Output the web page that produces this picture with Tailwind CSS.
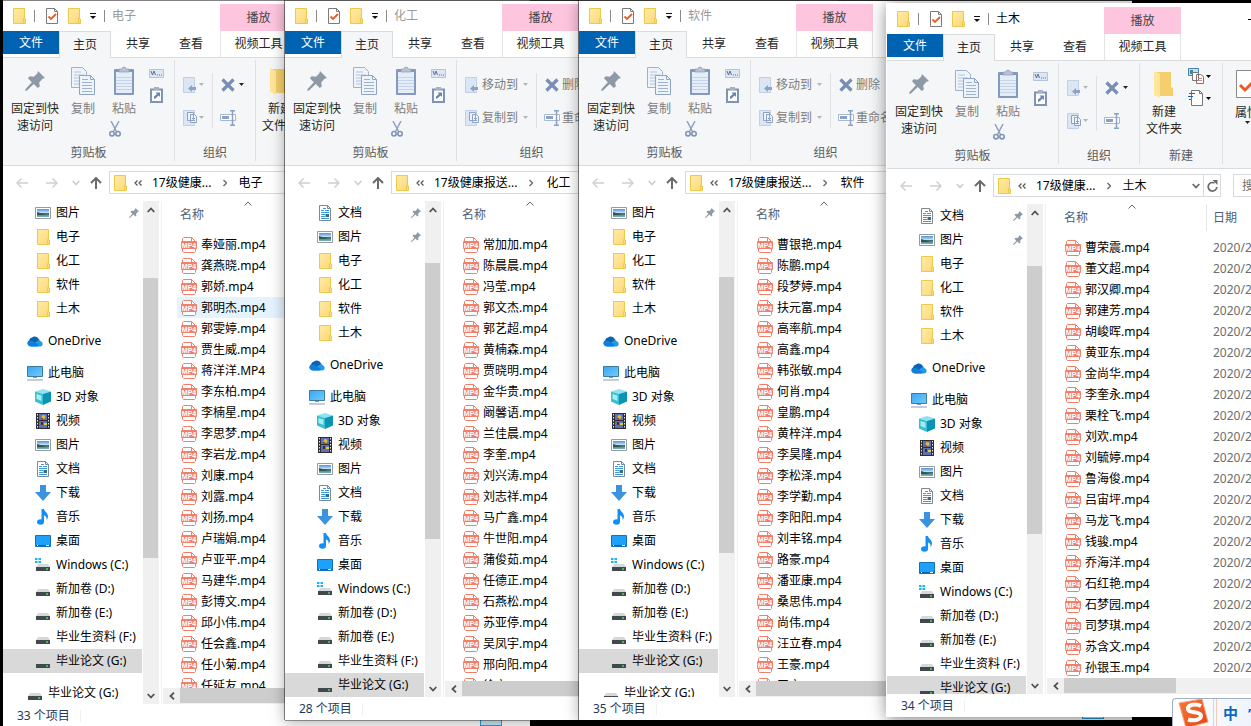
<!DOCTYPE html>
<html lang="zh-CN">
  <head>
    <meta charset="UTF-8" />
    <meta name="viewport" content="width=device-width, initial-scale=1.0" />
    <title>文件资源管理器</title>
    <script src="https://cdn.jsdelivr.net/npm/@tailwindcss/browser@4"></script>
  </head>
  <body class="bg-black font-['Noto_Sans','Noto_Sans_CJK_SC',sans-serif] text-xs text-black">
    <!-- Icons -->
    <svg class="absolute size-0">
      <defs>
        <linearGradient id="gFolder" x1="0" y1="0" x2="1" y2="1">
          <stop offset="0" stop-color="#ffeba6" />
          <stop offset="1" stop-color="#fcd876" />
        </linearGradient>
        <linearGradient id="gScreen" x1="0" y1="0" x2="1" y2="1">
          <stop offset="0" stop-color="#3aa5f0" />
          <stop offset="1" stop-color="#72cdfd" />
        </linearGradient>
        <linearGradient id="gSky" x1="0" y1="0" x2="0" y2="1">
          <stop offset="0" stop-color="#4f8fe0" />
          <stop offset="0.5" stop-color="#cfe6f8" />
          <stop offset="0.55" stop-color="#3c6b66" />
          <stop offset="1" stop-color="#7fb4c4" />
        </linearGradient>
        <linearGradient id="gSogou" x1="0" y1="0" x2="1" y2="1">
          <stop offset="0" stop-color="#f97a3c" />
          <stop offset="1" stop-color="#e8400f" />
        </linearGradient>
      </defs>
      <symbol id="folder" viewBox="0 0 13 16">
        <path d="M.5.5h11v10.5h1v4.5H.5z" fill="url(#gFolder)" stroke="#ecc94b" />
        <path d="M10.500 15v-4.500h1" fill="none" stroke="#ecc94b" />
      </symbol>
      <symbol id="check" viewBox="0 0 12 16">
        <path d="M.5.5h8l3 3v12H.5z" fill="#fff" stroke="#7a7a7a" />
        <path d="M8.500.5v3h3" fill="none" stroke="#7a7a7a" />
        <path d="M2.500 8.500l2.500 2.500 5-5" fill="none" stroke="#ee5a24" stroke-width="1.800" />
      </symbol>
      <symbol id="quick" viewBox="0 0 8 8">
        <path d="M1 1.500h6" stroke="#111" />
        <path d="M1 4h6L4 7z" fill="#111" />
      </symbol>
      <symbol id="caret" viewBox="0 0 5 3"><path d="M0 0h5L2.500 3z" fill="currentColor" /></symbol>
      <symbol id="pushpin" viewBox="0 0 20 20">
        <path d="M13 0l7 7-2.500.8-3.300 3.600.6 4-2 1.600-4-4L2 19.500.200 20 .6 18l6.200-6.700L3 7.300l1.600-2 4.300.5L12.300 2.500z" fill="#8d9aa6" />
      </symbol>
      <symbol id="copy" viewBox="0 0 24 28">
        <path d="M.5.5h11l4 4v16H.5z" fill="#eef3fa" stroke="#9fb2cd" />
        <path d="M3 5h7M3 8h10M3 11h10M3 14h10M3 17h10" stroke="#b5c5dc" />
        <path d="M8.500 8.500h11l4 4v15h-15z" fill="#eef3fa" stroke="#8fa5c5" />
        <path d="M19.500 8.500v4h4" fill="none" stroke="#8fa5c5" />
        <path d="M11 12.500h6M11 15.500h10M11 18.500h10M11 21.500h10M11 24.500h10" stroke="#9fb2cd" />
      </symbol>
      <symbol id="paste" viewBox="0 0 20 29">
        <rect x="0" y="3" width="20" height="26" rx="1" fill="#8399bd" />
        <rect x="2" y="6" width="16" height="21" fill="#e4edf8" />
        <path d="M2 11.500h16M2 14.500h16M2 17.500h16M2 20.500h16M2 23.500h16" stroke="#c3d3e8" />
        <path d="M5 6V3h3a2 2 0 014 0h3v3z" fill="#b9c4d3" stroke="#8b9bb3" stroke-width=".7" />
      </symbol>
      <symbol id="scissors" viewBox="0 0 12 16">
        <path d="M2 0l5.500 10.500M10 0L4.500 10.500" stroke="#8ea0bb" stroke-width="1.500" />
        <circle cx="3" cy="12.700" r="2.200" fill="none" stroke="#7f93b5" stroke-width="1.600" />
        <circle cx="9" cy="12.700" r="2.200" fill="none" stroke="#7f93b5" stroke-width="1.600" />
      </symbol>
      <symbol id="copypath" viewBox="0 0 15 9">
        <path d="M.5.5h14v8H.5z" fill="#dde7f4" stroke="#b4c4dc" />
        <path d="M2 2l1.500 4L5 2l1.500 4M8 6h1M10 6h1M12 6h1" fill="none" stroke="#5d7194" />
      </symbol>
      <symbol id="pastelink" viewBox="0 0 13 16">
        <path d="M1 2.500h11V15H1z" fill="#fff" stroke="#7e93b6" stroke-width="2" />
        <path d="M4 0h5v3H4z" fill="#a3b2ca" />
        <path d="M4 12V9.500L7 7 5.500 5.500H10V10L8.500 8.500 6 11z" fill="#6c84ad" />
      </symbol>
      <symbol id="moveto" viewBox="0 0 14 16">
        <path d="M.5.5h11v15H.5z" fill="#dbe6f4" stroke="#c1d0e6" />
        <path d="M5 11.500L9 8v2h4v3H9v2z" fill="#8da2c4" />
      </symbol>
      <symbol id="copyto" viewBox="0 0 14 16">
        <path d="M.5.5h11v15H.5z" fill="#dbe6f4" stroke="#c1d0e6" />
        <path d="M4.500 2.500h6v8h-6zM7.500 4.500h4l2 2v6h-6z" fill="#eef3fa" stroke="#8da2c4" />
        <path d="M9 8.500h3M9 10.500h3" stroke="#8da2c4" />
      </symbol>
      <symbol id="delete" viewBox="0 0 14 14">
        <path d="M1.500 1.500l11 11M12.500 1.500l-11 11" stroke="#788eb5" stroke-width="3.200" />
      </symbol>
      <symbol id="rename" viewBox="0 0 16 16">
        <path d="M.5 4.500h15v6H.5z" fill="#fff" stroke="#a8b8d0" />
        <path d="M2 6h7v3H2z" fill="#8ba1c5" />
        <path d="M10 .8h5M10 15.200h5M12.500 1v14" stroke="#8ba1c5" stroke-width="1.500" />
      </symbol>
      <symbol id="newfolder" viewBox="0 0 20 27">
        <path d="M2 1h15v15l2 1v8H2z" fill="#f5cf6d" />
        <path d="M0 0l6 3v24l-6-3z" fill="#ffe69a" />
      </symbol>
      <symbol id="newitem" viewBox="0 0 16 16">
        <path d="M.5.5h10v7H.5z" fill="#bfe2f3" stroke="#3f88b5" />
        <path d="M2 2h3v4H2z" fill="#4d7f8f" />
        <path d="M4.500 4.500h6v8h-6zM8.500 6.500h4l3 2v7h-7z" fill="#fff" stroke="#777" />
        <path d="M10 10.500h4M10 12.500h4" stroke="#d98a7a" />
      </symbol>
      <symbol id="easy" viewBox="0 0 16 16">
        <path d="M3.500.5h8l3 3v12h-11z" fill="#fff" stroke="#777" />
        <path d="M11.500.5v3h3" fill="none" stroke="#777" />
        <path d="M1 3.500h6M0 6.500h5M1 9.500h2" stroke="#2b5f94" />
      </symbol>
      <symbol id="props" viewBox="0 0 22 28">
        <path d="M.5.5h21v27H.5z" fill="#fff" stroke="#8a8a8a" />
        <path d="M4 15l5 5 9-9" fill="none" stroke="#ee5a24" stroke-width="3" />
      </symbol>
      <symbol id="back" viewBox="0 0 12 10"><path d="M12 5H1M5.500.5L1 5l4.500 4.500" fill="none" stroke="currentColor" stroke-width="1.500" /></symbol>
      <symbol id="forward" viewBox="0 0 12 10"><path d="M0 5h11M6.500.5L11 5 6.500 9.500" fill="none" stroke="currentColor" stroke-width="1.500" /></symbol>
      <symbol id="up" viewBox="0 0 12 12"><path d="M6 12V1.500M1 6l5-5 5 5" fill="none" stroke="currentColor" stroke-width="2" /></symbol>
      <symbol id="down" viewBox="0 0 8 6"><path d="M.7 1L4 4.500 7.300 1" fill="none" stroke="currentColor" stroke-width="1.800" /></symbol>
      <symbol id="chevup" viewBox="0 0 8 6"><path d="M.7 5L4 1.500 7.300 5" fill="none" stroke="currentColor" stroke-width="1.800" /></symbol>
      <symbol id="thinup" viewBox="0 0 8 5"><path d="M.5 4.500L4 1l3.500 3.500" fill="none" stroke="currentColor" /></symbol>
      <symbol id="left" viewBox="0 0 6 8"><path d="M5 .7L1.500 4 5 7.300" fill="none" stroke="currentColor" stroke-width="1.800" /></symbol>
      <symbol id="right" viewBox="0 0 4 8"><path d="M.5 1l3 3-3 3" fill="none" stroke="currentColor" stroke-width="1.400" /></symbol>
      <symbol id="more" viewBox="0 0 8 6"><path d="M3.500.5L1 3l2.500 2.500M7.500.5L5 3l2.500 2.500" fill="none" stroke="currentColor" stroke-width="1.200" /></symbol>
      <symbol id="refresh" viewBox="0 0 11 12">
        <path d="M9.800 7A4.300 4.300 0 1 1 7.500 3" fill="none" stroke="currentColor" stroke-width="1.700" />
        <path d="M5.500 0h5v5z" fill="currentColor" />
      </symbol>
      <symbol id="mp4" viewBox="0 0 16 16">
        <path d="M1.500 5V1.500l1-1h8l4 4V5M1.500 11v3.500l1 1h11l1-1V11" fill="#fff" stroke="#f08069" />
        <path d="M10.500.5v4h4" fill="none" stroke="#f08069" />
        <rect x="0" y="4" width="16" height="8" rx="1" fill="#f08069" />
        <text x="8" y="10.500" text-anchor="middle" font-size="7" font-weight="700" fill="#fff" font-family="Liberation Sans, sans-serif">MP4</text>
      </symbol>
      <symbol id="doc" viewBox="0 0 16 16">
        <path d="M2.500.5h8l3 3v12h-11z" fill="#fff" stroke="#7b8a94" />
        <path d="M10.500.5v3h3" fill="none" stroke="#7b8a94" />
        <path d="M6 3.500h3M4 5.500h3M8 5.500h4M4 7.500h8M4 9.500h4M4 11.500h4M4 13.500h8" stroke="#3f9bd6" />
        <path d="M8.500 9h3.500v3H8.500z" fill="#3c6b85" />
      </symbol>
      <symbol id="pic" viewBox="0 0 16 16">
        <path d="M.5 2.500h15v11H.5z" fill="#fff" stroke="#959b9f" />
        <path d="M2 4h12v8H2z" fill="url(#gSky)" />
        <path d="M2 7l5 1.500 4 1.500H2z" fill="#2c5a4f" />
      </symbol>
      <symbol id="cloud" viewBox="0 0 16 16">
        <path d="M3 13a3 3 0 01-1-5.500A4 4 0 015 4.500a4.500 4.500 0 017 2l1 .5-8 6z" fill="#0a63b8" />
        <path d="M3.500 13.500L10 8a3 3 0 014 .5 2.600 2.600 0 01-.5 5z" fill="#1f9be8" />
        <path d="M3.200 13.500a3 3 0 01-2-5c1-1 3-1.200 5-.2l6 4-2 1.200z" fill="#127fd6" />
      </symbol>
      <symbol id="pc" viewBox="0 0 16 16">
        <path d="M.5 1.500h15v10H.5z" fill="url(#gScreen)" stroke="#3b7ca5" />
        <path d="M6 12.500h4M0 15h16" stroke="#8a9db0" />
      </symbol>
      <symbol id="cube" viewBox="0 0 16 16">
        <path d="M8 0l8 2.500L8 5 0 2.500z" fill="#8fe3ee" />
        <path d="M0 2.500L8 5v11l-8-3.500z" fill="#35bfd0" />
        <path d="M16 2.500L8 5v11l8-3.500z" fill="#0a93b2" />
        <path d="M1.500 5l5 1.500v5.500l-5-2z" fill="#a5ecf3" />
      </symbol>
      <symbol id="video" viewBox="0 0 16 16">
        <path d="M1 0h14v16H1z" fill="#2d2d33" />
        <path d="M2.500 1v14M13.500 1v14" stroke="#e6e6e6" stroke-dasharray="1.500 1.500" />
        <path d="M4 1h8v6H4zM4 8h8v7H4z" fill="#5873b8" />
        <circle cx="8.500" cy="4" r="2" fill="#e0b93a" />
        <path d="M6 5h2v2H6z" fill="#b5432a" />
        <path d="M6 9h2v3H6z" fill="#3d2f2a" />
        <path d="M9 10h3v2H9z" fill="#e8c93f" />
      </symbol>
      <symbol id="download" viewBox="0 0 16 16"><path d="M5 0h6v7h5l-8 9-8-9h5z" fill="#3b93e0" /></symbol>
      <symbol id="music" viewBox="0 0 16 16">
        <path d="M6.500 0h2.500c.3 2.500 4 3.500 4 7.500 0 1.500-.7 2.500-1.500 3.500.5-2.500-.5-4-2.500-4.500V13H6.500z" fill="#1391f2" />
        <ellipse cx="5.500" cy="13" rx="3.500" ry="2.700" fill="#1391f2" />
      </symbol>
      <symbol id="desk" viewBox="0 0 16 16">
        <path d="M.5 2.500h15v11H.5z" fill="#1da1fb" stroke="#1473b8" />
        <path d="M1 12.500h14" stroke="#0b5fa3" />
        <path d="M2 12.500h1M11 12.500h3" stroke="#fff" />
      </symbol>
      <symbol id="drive" viewBox="0 0 16 16">
        <path d="M3 8h10l2 3H1z" fill="#d5d9dd" />
        <path d="M1 11h14v4H1z" fill="#43484c" />
        <path d="M11 13h2" stroke="#3fe05a" stroke-width="1.500" />
      </symbol>
      <symbol id="windrive" viewBox="0 0 16 16">
        <path d="M3 7h10l2 3H1z" fill="#d5d9dd" />
        <path d="M1 10h14v4H1z" fill="#43484c" />
        <path d="M11 12h2" stroke="#3fe05a" stroke-width="1.500" />
        <path d="M0 1h2.500v2H0zM3.500 1H6v2H3.500zM0 4h2.500v2H0zM3.500 4H6v2H3.500z" fill="#16b4f2" />
      </symbol>
      <symbol id="sogou" viewBox="0 0 32 28">
        <path d="M2 4L25 0l6 23-22 6z" fill="url(#gSogou)" stroke="#f9a27a" />
        <path d="M24 7C18 4 10 6 11 10.500c1 4 12 1.500 13 6 .5 4-7 6-13 4" fill="none" stroke="#fff" stroke-width="4" />
      </symbol>
    </svg>

    <main id="desktop" class="relative h-screen overflow-hidden"></main>

    <!-- Input method bar -->
    <aside class="absolute right-0 bottom-0 flex h-7 w-[79px] items-center overflow-hidden rounded-tl-sm border-t border-l border-[#9fb0c0] bg-gradient-to-r from-white to-[#eef4fb]">
      <svg class="ml-1 h-7 w-8 shrink-0"><use href="#sogou" /></svg>
      <span class="ml-1 h-7 w-1 shrink-0 border-x border-[#f7c9bb]"></span>
      <button class="ml-1.5 shrink-0 text-[15px] font-bold text-[#0a66c2]">中</button>
      <button class="ml-2.5 shrink-0 text-[15px] font-bold text-[#0a66c2]">’</button>
    </aside>

    <script>
      const quick = [
        ["folder", "电子"],
        ["folder", "化工"],
        ["folder", "软件"],
        ["folder", "土木"],
      ];

      const computer = [
        ["cube", "3D 对象"],
        ["video", "视频"],
        ["pic", "图片"],
        ["doc", "文档"],
        ["download", "下载"],
        ["music", "音乐"],
        ["desk", "桌面"],
        ["windrive", "Windows (C:)"],
        ["drive", "新加卷 (D:)"],
        ["drive", "新加卷 (E:)"],
        ["drive", "毕业生资料 (F:)"],
      ];

      const windows = [
        {
          title: "电子",
          frame: "top-0 -bottom-px left-[3px] w-[527px] border-[#848284]",
          titleColor: "text-[#999999]",
          path: "17级健康...",
          count: 33,
          pins: ["图片"],
          thumb: [60, 280],
          hover: 3,
          files: "奉娅丽 龚燕晓 郭娇 郭明杰 郭雯婷 贾生威 蒋洋洋.MP4 李东柏 李楠星 李思梦 李岩龙 刘康 刘露 刘扬 卢瑞娟 卢亚平 马建华 彭博文 邱小伟 任会鑫 任小菊 任延友",
        },
        {
          title: "化工",
          frame: "top-0 bottom-[6px] left-[285px] w-[553px] border-white/15",
          titleColor: "text-[#999999]",
          wide: true,
          path: "17级健康报送...",
          count: 28,
          pins: ["文档", "图片"],
          thumb: [45, 276],
          files: "常加加 陈晨晨 冯莹 郭文杰 郭艺超 黄楠森 贾晓明 金华贵 阚馨语 兰佳晨 李奎 刘兴涛 刘志祥 马广鑫 牛世阳 蒲俊茹 任德正 石燕松 苏亚停 吴凤宇 邢向阳 徐文",
        },
        {
          title: "软件",
          frame: "top-0 bottom-[6px] left-[579px] w-[553px] border-white/15",
          titleColor: "text-[#999999]",
          wide: true,
          path: "17级健康报送...",
          count: 35,
          pins: ["图片"],
          thumb: [59, 276],
          files: "曹银艳 陈鹏 段梦婷 扶元富 高率航 高鑫 韩张敏 何肖 皇鹏 黄梓洋 李昊隆 李松泽 李学勤 李阳阳 刘丰铭 路豪 潘亚康 桑思伟 尚伟 汪立春 王豪 王文",
        },
        {
          title: "土木",
          frame: "top-[3px] bottom-[9px] left-[887px] w-[481px] border-white",
          titleColor: "text-black",
          active: true,
          path: "17级健康...",
          count: 34,
          pins: ["文档", "图片"],
          thumb: [45, 268],
          files: "曹荣震 董文超 郭汉卿 郭建芳 胡峻晖 黄亚东 金尚华 李奎永 栗栓飞 刘欢 刘毓婷 鲁海俊 吕宙坪 马龙飞 钱骏 乔海洋 石红艳 石梦园 司梦琪 苏含文 孙银玉",
        },
      ];

      const icon = (id, cls) => `<svg class="shrink-0 ${cls}"><use href="#${id}"/></svg>`;

      function titleBar(w) {
        return `
        <div class="flex h-[30px] items-center">
          <div class="flex w-[217px] shrink-0 items-center pl-2.5">
            ${icon("folder", "h-4 w-[13px]")}
            <span class="ml-2 h-3 w-px bg-[#8a8a8a]"></span>
            <button class="ml-[11px]" aria-label="属性">${icon("check", "h-4 w-3")}</button>
            <button class="ml-2.5" aria-label="新建文件夹">${icon("folder", "h-4 w-[13px]")}</button>
            <button class="ml-2" aria-label="自定义快速访问工具栏">${icon("quick", "size-2")}</button>
            <span class="ml-[7px] h-3 w-px bg-[#8a8a8a]"></span>
            <h1 class="ml-[7px] ${w.titleColor}">${w.title}</h1>
          </div>
          <div class="flex h-[27px] w-[77px] shrink-0 items-center justify-center self-end bg-[#fec5df] text-[#444]">播放</div>
          ${
            w.active
              ? `<div class="ml-auto flex">
                  <button class="flex h-[30px] w-[46px] items-center justify-center" aria-label="最小化"><span class="h-px w-2.5 bg-black"></span></button>
                  <button class="flex h-[30px] w-[46px] items-center justify-center" aria-label="最大化"><span class="size-2.5 border border-black"></span></button>
                  <button class="h-[30px] w-[46px]" aria-label="关闭">✕</button>
                </div>`
              : ""
          }
        </div>`;
      }

      function tabs() {
        return `
        <div class="flex h-[27px] shrink-0 border-b border-[#dadbdc] text-[#262626]">
          <button class="h-[23px] w-14 bg-[#0063b1] pt-px text-white">文件</button>
          <button class="h-[27px] w-[52px] border border-b-0 border-[#dadbdc] bg-[#f5f6f7] pb-px">主页</button>
          <button class="h-[26px] w-[54px]">共享</button>
          <button class="h-[26px] w-[52px]">查看</button>
          <button class="ml-[3px] h-[26px] w-[77px] border-x border-[#e4e4e4]">视频工具</button>
        </div>`;
      }

      const group = (label, width, body) => `
        <section class="mt-0.5 flex h-[101px] shrink-0 flex-col border-r border-[#dfe0e1] ${width}">
          <div class="flex h-[86px] items-start">${body}</div>
          <h2 class="text-center leading-4 text-[#5a5a5a]">${label}</h2>
        </section>`;

      function organize(w) {
        const row = (id, label) => `
          <button class="flex h-[33px] items-center">
            ${icon(id, "h-4 w-3.5")}
            ${w.wide ? `<span class="ml-[3px] mr-[5px]">${label}</span>` : `<span class="w-0.5"></span>`}
            ${icon("caret", "h-[3px] w-[5px] text-[#b5b5b5]")}
          </button>`;
        return group("组织", w.wide ? "w-[150px]" : "w-[81px]", `
          <div class="ml-2 pt-2 text-[#7d7d7d]">${row("moveto", "移动到")}${row("copyto", "复制到")}</div>
          <span class="mt-[13px] ml-2 h-[55px] w-px bg-[#dfe0e1]"></span>
          <div class="ml-[7px] pt-2 text-[#7d7d7d]">
            <button class="flex h-[33px] items-center whitespace-nowrap">
              ${icon("delete", "mx-px size-3.5")}
              ${w.wide ? `<span class="ml-0.5">删除</span>` : icon("caret", "ml-[3px] h-[3px] w-[5px] text-[#222]")}
            </button>
            <button class="flex h-[33px] items-center whitespace-nowrap">
              ${icon("rename", "size-4")}
              ${w.wide ? `<span class="ml-0.5">重命名</span>` : ""}
            </button>
          </div>`);
      }

      function ribbon(w) {
        const clipboard = group("剪贴板", "w-[172px]", `
          <button class="flex w-16 flex-col items-center pt-[11px] leading-[17px] text-[#262626]">
            ${icon("pushpin", "mb-[9px] size-5")}固定到快<br />速访问
          </button>
          <button class="flex w-8 flex-col items-center pt-[7px] leading-[17px] text-[#7d7d7d]">
            ${icon("copy", "mb-[5px] h-7 w-6")}复制
          </button>
          <div class="flex w-[50px] flex-col items-center pt-1.5 leading-[17px] text-[#7d7d7d]">
            <button class="flex flex-col items-center">${icon("paste", "mb-[5px] h-[29px] w-5")}粘贴</button>
            <button class="mt-1 ml-2.5 self-start" aria-label="剪切">${icon("scissors", "h-4 w-3")}</button>
          </div>
          <div class="flex flex-col items-center gap-[9px] pt-[9px]">
            <button aria-label="复制路径">${icon("copypath", "h-[9px] w-[15px]")}</button>
            <button aria-label="粘贴快捷方式">${icon("pastelink", "h-4 w-[13px]")}</button>
          </div>`);

        const create = group("新建", "w-[83px]", `
          <button class="flex w-12 flex-col items-center pt-2 leading-[17px] text-[#262626]">
            ${icon("newfolder", "mb-[5px] h-[27px] w-5")}新建<br />文件夹
          </button>
          <div class="flex flex-col gap-1.5 pt-[5px]">
            <button class="flex items-center gap-0.5" aria-label="新建项目">${icon("newitem", "size-4")}${icon("caret", "h-[3px] w-[5px]")}</button>
            <button class="flex items-center gap-0.5" aria-label="轻松访问">${icon("easy", "size-4")}${icon("caret", "h-[3px] w-[5px]")}</button>
          </div>`);

        const open = group("打开", "w-[96px]", `
          <button class="flex w-12 flex-col items-center pt-[7px] leading-[17px] text-[#262626]">
            ${icon("props", "mb-1.5 h-7 w-[22px]")}属性${icon("caret", "h-[3px] w-[5px]")}
          </button>`);

        return `<div class="flex h-[108px] shrink-0 overflow-hidden border-b border-[#dadbdc] bg-[#f5f6f7]">
          ${clipboard}${organize(w)}${w.wide ? "" : create + open}
        </div>`;
      }

      function addressBar(w) {
        return `
        <div class="flex h-[35px] shrink-0 items-start pt-[5px]">
          <div class="flex h-[23px] w-[106px] shrink-0 items-center pl-[13px] text-[#d0d0d0]">
            <button aria-label="后退">${icon("back", "h-2.5 w-3")}</button>
            <button class="ml-[18px]" aria-label="前进">${icon("forward", "h-2.5 w-3")}</button>
            <button class="ml-3.5" aria-label="最近">${icon("down", "h-1.5 w-2")}</button>
            <button class="ml-2.5 text-[#6a6a6a]" aria-label="向上">${icon("up", "size-3")}</button>
          </div>
          <nav class="flex h-[23px] shrink-0 items-center border border-[#d9d9d9] whitespace-nowrap ${w.wide ? "w-[300px]" : "w-[228px]"}">
            ${icon("folder", "ml-1 h-4 w-[13px]")}
            ${icon("more", "ml-[7px] h-1.5 w-2 text-[#555]")}
            <a href="#" class="ml-2.5">${w.path}</a>
            ${icon("right", "ml-3 h-2 w-1 text-[#6a6a6a]")}
            <a href="#" class="${w.wide ? "ml-[13px]" : "ml-[11px]"}">${w.title}</a>
            <button class="mr-[3px] ml-auto text-[#6a6a6a]" aria-label="历史">${icon("down", "h-1.5 w-2")}</button>
            <button class="flex h-[21px] w-[17px] items-center justify-center border-l border-[#d9d9d9] text-[#6a6a6a]" aria-label="刷新">${icon("refresh", "h-3 w-[11px]")}</button>
          </nav>
          <input type="search" aria-label="搜索" placeholder="搜索&quot;${w.title}&quot;" class="ml-3 h-[23px] min-w-0 flex-1 border border-[#d9d9d9] pl-2 placeholder:text-[#6d6d6d]" />
        </div>`;
      }

      function navPane(w) {
        const child = ([id, label], extra = "", pinned = false) => `
          <a href="#" class="flex h-6 shrink-0 items-center pl-8 whitespace-nowrap ${extra}">
            ${icon(id, id === "folder" ? "mr-[6px] ml-0.5 h-4 w-[13px]" : "mr-[5px] size-4")}${label}
            ${pinned ? icon("pushpin", "mr-[3px] ml-auto size-2.5") : ""}
          </a>`;
        const parent = (id, label) => `
          <a href="#" class="mt-2 flex h-6 shrink-0 items-center gap-[5px] pl-6 whitespace-nowrap">${icon(id, "size-4")}${label}</a>`;
        return `
        <nav class="flex w-[139px] shrink-0 flex-col overflow-hidden">
          ${w.pins.map((p) => child([p === "文档" ? "doc" : "pic", p], "", true)).join("")}
          ${quick.map((q) => child(q)).join("")}
          ${parent("cloud", "OneDrive")}
          ${parent("pc", "此电脑")}
          ${computer.map((c) => child(c)).join("")}
          ${child(["drive", "毕业论文 (G:)"], "bg-[#d9d9d9]")}
          ${parent("drive", "毕业论文 (G:)")}
        </nav>
        <div class="ml-px flex w-4 shrink-0 flex-col bg-[#f0f0f0] text-[#505050]">
          <button class="flex h-[17px] w-[15px] items-center justify-center" aria-label="向上滚动">${icon("chevup", "h-1.5 w-2")}</button>
          <div class="w-[15px] bg-[#cdcdcd]" style="margin-top: ${w.thumb[0]}px; height: ${w.thumb[1]}px"></div>
          <button class="mt-auto flex h-[17px] w-[15px] items-center justify-center" aria-label="向下滚动">${icon("down", "h-1.5 w-2")}</button>
        </div>`;
      }

      function filePane(w) {
        const rows = w.files.split(" ").map((name, i) => `
          <tr class="h-[21px] ${i === w.hover ? "bg-[#e5f3ff]" : ""}">
            <td class="p-0"><div class="flex h-[21px] items-center gap-1 pl-1">${icon("mp4", "size-4")}${name.includes(".") ? name : name + ".mp4"}</div></td>
            <td class="p-0 pl-[7px] text-[#6d6d6d]">2020/2/10</td>
          </tr>`);
        return `
        <div class="ml-0.5 flex min-w-0 flex-1 flex-col border-l border-[#f0f0f0]">
          <div class="min-h-0 flex-1 overflow-hidden pl-[15px]">
            <table class="w-full table-fixed border-collapse whitespace-nowrap">
              <thead>
                <tr class="h-[33px] text-left align-top text-[#4c607a]">
                  <th class="relative w-[145px] p-0 pl-[3px] leading-7 font-normal">名称${icon("thinup", "absolute top-0 left-[67px] h-[5px] w-2 text-[#666]")}</th>
                  <th class="p-0 font-normal"><div class="h-[27px] border-l border-[#e5e5e5] pl-1.5 leading-7">日期</div></th>
                </tr>
              </thead>
              <tbody>${rows.join("")}</tbody>
            </table>
          </div>
          <div class="ml-px flex h-4 shrink-0 bg-[#f0f0f0] text-[#505050]">
            <button class="flex w-[17px] items-center justify-center" aria-label="向左滚动">${icon("left", "h-2 w-1.5")}</button>
            <div class="h-[15px] bg-[#cdcdcd] ${w.active ? "w-28" : "w-80"}"></div>
          </div>
        </div>`;
      }

      function explorer(w) {
        return `
        <article class="absolute flex flex-col overflow-hidden border-t bg-white bg-clip-padding ${w.frame} ${w.active ? "shadow-[-1px_0_0_#fff,0_2px_16px_rgba(0,0,0,0.5)]" : "shadow-[-1px_0_0_rgba(0,0,0,0.45),0_1px_0_rgba(0,0,0,0.35),0_2px_14px_rgba(0,0,0,0.35)]"}">
          <header class="shrink-0">${titleBar(w)}${tabs()}</header>
          ${ribbon(w)}
          ${addressBar(w)}
          <div class="flex min-h-0 flex-1">${navPane(w)}${filePane(w)}</div>
          <footer class="flex h-[23px] shrink-0 items-center pl-3.5 text-[#1e395b]">
            <span class="border-r border-[#f0f0f0] pr-2.5 leading-3">${w.count} 个项目</span>
            <button class="mr-7 ml-auto h-[21px] w-[22px] border border-[#26a0da] bg-[#cbe8f6]" aria-label="详细信息"></button>
          </footer>
        </article>`;
      }

      document.getElementById("desktop").innerHTML = windows.map(explorer).join("");
    </script>
  </body>
</html>
